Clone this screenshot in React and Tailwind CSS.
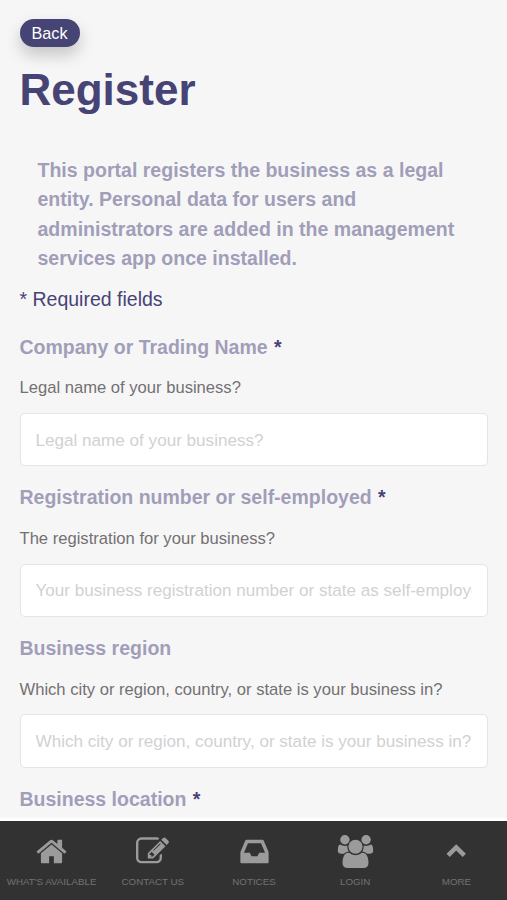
import React from 'react'

const fields = [
  {
    label: 'Company or Trading Name',
    required: true,
    help: 'Legal name of your business?',
    placeholder: 'Legal name of your business?',
  },
  {
    label: 'Registration number or self-employed',
    required: true,
    help: 'The registration for your business?',
    placeholder: 'Your business registration number or state as self-employed',
  },
  {
    label: 'Business region',
    help: 'Which city or region, country, or state is your business in?',
    placeholder: 'Which city or region, country, or state is your business in?',
  },
]

const icons = {
  home: 'M1472 992v480q0 26-19 45t-45 19h-384v-384h-256v384h-384q-26 0-45-19t-19-45v-480q0-1 .5-3t.5-3l575-474 575 474q1 2 1 6zm223-69l-62 74q-8 9-21 11h-3q-13 0-21-7l-692-577-692 577q-12 8-24 7-13-2-21-11l-62-74q-8-10-7-23.5t11-21.5l719-599q32-26 76-26t76 26l244 204v-195q0-14 9-23t23-9h192q14 0 23 9t9 23v408l219 182q10 8 11 21.5t-7 23.5z',
  edit: 'M888 1184l116-116-152-152-116 116v56h96v96h56zm440-720q-16-16-33 1l-350 350q-17 17-1 33t33-1l350-350q17-17 1-33zm80 594v190q0 119-84.5 203.5t-203.5 84.5h-832q-119 0-203.5-84.5t-84.5-203.5v-832q0-119 84.5-203.5t203.5-84.5h832q63 0 117 25 15 7 18 23 3 17-9 29l-49 49q-14 14-32 8-23-6-45-6h-832q-66 0-113 47t-47 113v832q0 66 47 113t113 47h832q66 0 113-47t47-113v-126q0-13 9-22l64-64q15-15 35-7t20 29zm-96-738l288 288-672 672h-288v-288zm444 132l-92 92-288-288 92-92q28-28 68-28t68 28l152 152q28 28 28 68t-28 68z',
  inbox: 'M1151 960h316q-1-3-2.5-8t-2.5-8l-212-496h-708l-212 496q-1 2-2.5 8t-2.5 8h316l95 192h320zm513 30v482q0 26-19 45t-45 19h-1408q-26 0-45-19t-19-45v-482q0-62 25-123l238-552q10-25 36.5-42t52.5-17h832q26 0 52.5 17t36.5 42l238 552q25 61 25 123z',
  group: 'M529 896q-162 5-265 128h-134q-82 0-138-40.5t-56-118.5q0-353 124-353 6 0 43.5 21t97.5 42.5 119 21.5q67 0 133-23-5 37-5 66 0 139 81 256zm1071 637q0 120-73 189.5t-194 69.5h-874q-121 0-194-69.5t-73-189.5q0-53 3.5-103.5t14-109 26.5-108.5 43-97.5 62-81 85.5-53.5 111.5-20q10 0 43 21.5t73 48 107 48 135 21.5 135-21.5 107-48 73-48 43-21.5q61 0 111.5 20t85.5 53.5 62 81 43 97.5 26.5 108.5 14 109 3.5 103.5zm-1024-1277q0 106-75 181t-181 75-181-75-75-181 75-181 181-75 181 75 75 181zm704 384q0 159-112.5 271.5t-271.5 112.5-271.5-112.5-112.5-271.5 112.5-271.5 271.5-112.5 271.5 112.5 112.5 271.5zm576 225q0 78-56 118.5t-138 40.5h-134q-103-123-265-128 81-117 81-256 0-29-5-66 66 23 133 23 59 0 119-21.5t97.5-42.5 43.5-21q124 0 124 353zm-128-609q0 106-75 181t-181 75-181-75-75-181 75-181 181-75 181 75 75 181z',
  up: 'M440 1110L880 670L1320 1110',
}

const tabs = [
  { icon: 'home', label: "What's available" },
  { icon: 'edit', label: 'Contact us' },
  { icon: 'inbox', label: 'Notices' },
  { icon: 'group', label: 'Login' },
  { icon: 'up', label: 'More' },
]

const TabIcon = ({ name }) => (
  <svg viewBox="0 0 1792 1792" className="w-[33px] h-[33px] overflow-visible">
    {name === 'up' ? (
      <path d={icons.up} fill="none" stroke="currentColor" strokeWidth="245" />
    ) : (
      <path d={icons[name]} fill="currentColor" />
    )}
  </svg>
)

const Label = ({ children, required }) => (
  <label className="block text-[19.5px] leading-[29.25px] font-bold text-[#a09eb9]">
    {children}
    {required && <span className="ml-px text-[#464375]"> *</span>}
  </label>
)

const Field = ({ label, required, help, placeholder }) => (
  <div className="mb-[17.1px]">
    <Label required={required}>{label}</Label>
    <p className="mt-[16.2px] mb-[14.6px] text-[16.6px] leading-5 text-[#727172]">{help}</p>
    <input
      type="text"
      placeholder={placeholder}
      className="block w-full h-[53.5px] px-[15px] pt-[2px] rounded-[5px] border border-[#e6e4e6] bg-white text-[17.1px] placeholder:text-[#d2d1d2] outline-none"
    />
  </div>
)

const App = () => {
  return (
    <div className="h-screen flex flex-col overflow-hidden bg-[#f7f6f7] font-['Liberation_Sans',Arial,sans-serif]">
      <main className="flex-1 min-h-0 overflow-hidden px-[19.5px] pt-[19px]">
        <button className="block h-[28px] w-[60px] rounded-full bg-[#464375] text-white text-[16.2px] leading-[28px] text-center shadow-[0_8px_16px_rgba(0,0,0,0.2)]">
          Back
        </button>
        <h1 className="mt-[17px] text-[44px] leading-[52px] font-bold text-[#464375]">Register</h1>
        <p className="mt-[40px] mx-[18px] text-[19.55px] leading-[29.25px] font-bold text-[#a09eb9]">
          This portal registers the business as a legal entity. Personal data for users and administrators are added in
          the management services app once installed.
        </p>
        <p className="mt-[12px] mb-[18.6px] text-[19.5px] leading-[29.25px] text-[#464375]">* Required fields</p>
        {fields.map((field) => (
          <Field key={field.label} {...field} />
        ))}
        <Label required>Business location</Label>
      </main>

      <nav className="h-[82px] shrink-0 flex pl-px border-t-[3px] border-white bg-[#323232]">
        {tabs.map((tab) => (
          <a key={tab.label} className="flex-1 basis-0 min-w-0 flex flex-col items-center pt-[14px]">
            <span className="text-[#9b9b9b]">
              <TabIcon name={tab.icon} />
            </span>
            <span className="mt-[7px] text-[9.75px] leading-[14px] uppercase whitespace-nowrap text-[#737373]">
              {tab.label}
            </span>
          </a>
        ))}
      </nav>
    </div>
  )
}

export default App
